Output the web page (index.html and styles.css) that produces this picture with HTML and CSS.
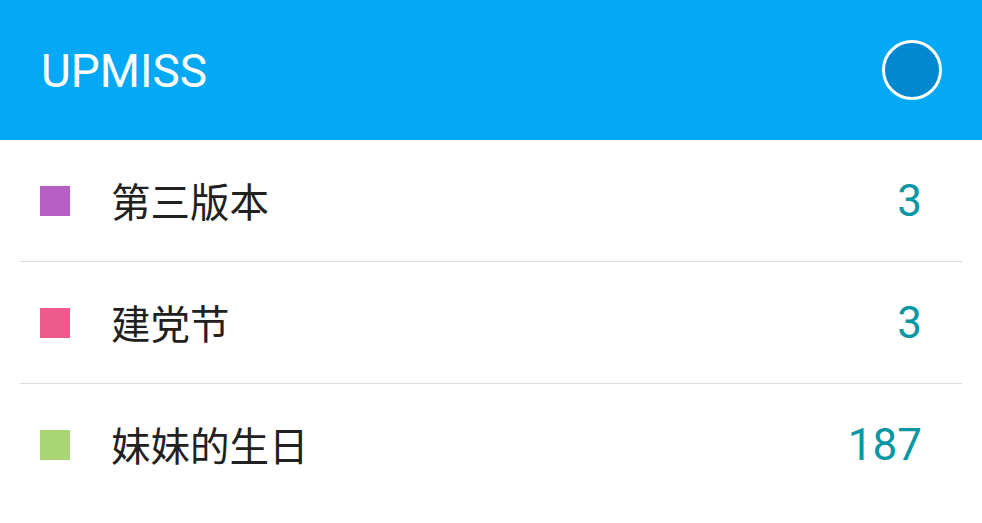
FILE: index.html
```html
<!DOCTYPE html>
<html lang="zh">
<head>
<meta charset="utf-8">
<link rel="stylesheet" href="styles.css">
</head>
<body>
<header class="bar">
  <h1 class="title">UPMISS</h1>
  <div class="avatar"></div>
</header>
<ul class="list">
  <li class="row"><span class="swatch purple"></span><span class="name">第三版本</span><span class="count">3</span></li>
  <li class="row"><span class="swatch pink"></span><span class="name">建党节</span><span class="count">3</span></li>
  <li class="row"><span class="swatch green"></span><span class="name">妹妹的生日</span><span class="count">187</span></li>
</ul>
</body>
</html>
```
FILE: styles.css
```css
html, body {
  margin: 0;
  padding: 0;
  background: #ffffff;
  height: 100%;
  overflow: hidden;
}
body {
  font-family: Roboto, "Noto Sans CJK SC", sans-serif;
}
.bar {
  height: 140px;
  background: #03a9f4;
  display: flex;
  align-items: center;
  justify-content: space-between;
  padding: 0 40px 0 41px;
  box-sizing: border-box;
}
.title {
  margin: 0;
  color: #ffffff;
  font-weight: 400;
  font-size: 46px;
  line-height: 1;
  padding-top: 2px;
}
.avatar {
  width: 54px;
  height: 54px;
  border-radius: 50%;
  background: #0288d1;
  border: 3px solid #ffffff;
  margin-top: -1px;
}
.list {
  list-style: none;
  margin: 0;
  padding: 0 20px;
}
.row {
  height: 121px;
  display: flex;
  align-items: center;
  padding: 0 40px 0 20px;
  border-bottom: 1px solid #dcdcdc;
}
.row:last-child {
  border-bottom: none;
}
.swatch {
  width: 30px;
  height: 30px;
  flex: none;
  margin-right: 41px;
}
.purple { background: #b660c6; }
.pink { background: #ef5a8c; }
.green { background: #a8d674; }
.name {
  flex: 1;
  font-family: "Noto Sans CJK SC", sans-serif;
  font-size: 39.5px;
  color: #212121;
  line-height: 1;
  margin-top: -2px;
}
.count {
  font-family: Roboto, sans-serif;
  font-size: 44px;
  color: #0a97a4;
  line-height: 1;
}
```
